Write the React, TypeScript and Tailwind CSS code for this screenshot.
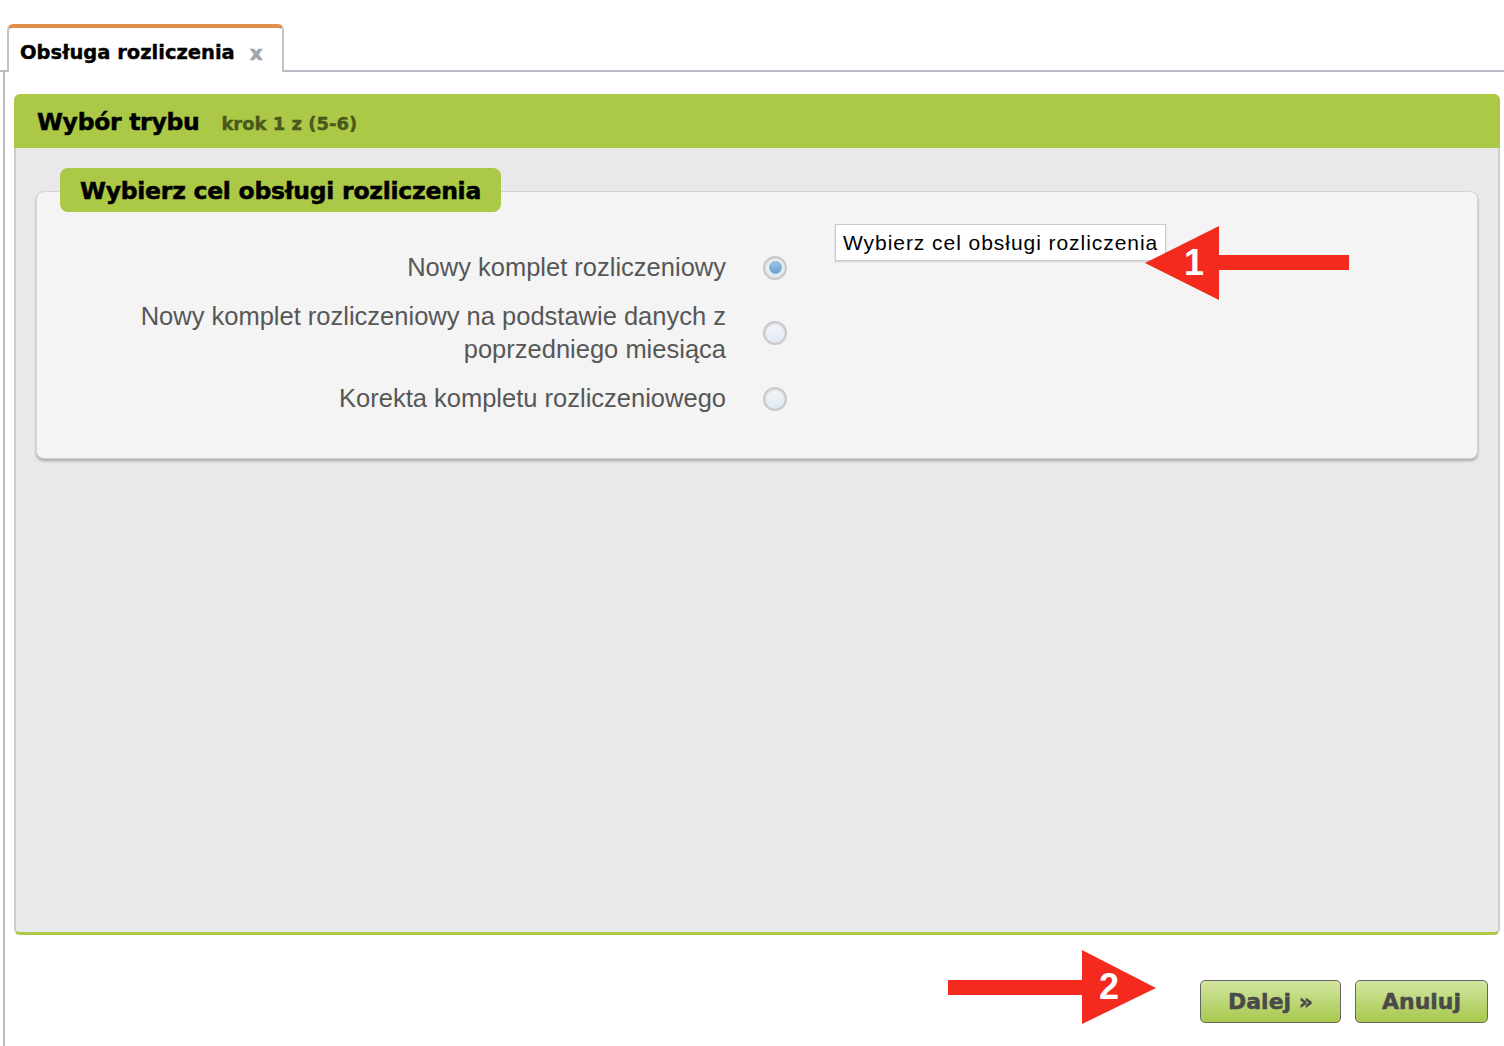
import React from 'react';

const Radio = ({ checked }: { checked?: boolean }) => (
  <div className="w-6 h-6 shrink-0 rounded-full border-2 border-[#c9c9c9] bg-gradient-to-b from-[#f4f7fa] to-[#dfe8f1] flex items-center justify-center shadow-[inset_0_1px_2px_rgba(0,0,0,0.15)]">
    {checked && <div className="w-[13px] h-[13px] rounded-full bg-gradient-to-b from-[#9cc4e6] to-[#6aa2d3] border border-[#7aa9d2]" />}
  </div>
);

const Arrow = ({ dir, label }: { dir: 'left' | 'right'; label: string }) => (
  <div className="relative w-[208px] h-[74px]">
    <svg width="208" height="74" viewBox="0 0 208 74" className="absolute inset-0">
      {dir === 'left' ? (
        <polygon points="0,37 74,0 74,29 204,29 204,44 74,44 74,74" fill="#f42a1f" />
      ) : (
        <polygon points="208,38 134,0 134,30 0,30 0,45 134,45 134,74" fill="#f42a1f" />
      )}
    </svg>
    <span
      className={`absolute top-[15px] font-['Liberation_Sans',Arial,sans-serif] font-bold text-[36px] leading-[44px] text-white ${
        dir === 'left' ? 'left-[39px]' : 'left-[151px]'
      }`}
    >
      {label}
    </span>
  </div>
);

export default function App() {
  return (
    <div className="relative w-[1504px] h-[1046px] bg-white overflow-hidden font-['DejaVu_Sans',Verdana,sans-serif]">
      {/* tab strip */}
      <div className="pt-6 flex">
        <div className="w-[7px] h-[48px] border-b-2 border-[#babbc4]" />
        <div className="w-[277px] h-[48px] bg-white border-t-4 border-t-[#e0904c] border-x-2 border-x-[#c2c3cb] rounded-t-md flex items-center pl-[11px] pt-[6px] gap-[15px]">
          <span className="text-[19.5px] font-bold text-black [-webkit-text-stroke:0.4px]">Obsługa rozliczenia</span>
          <span className="text-[20px] font-bold text-[#9ea5ad] leading-none [-webkit-text-stroke:0.6px]">x</span>
        </div>
        <div className="flex-1 h-[48px] border-b-2 border-[#babbc4]" />
      </div>

      {/* content */}
      <div className="ml-[3px] h-[974px] border-l-2 border-[#babbc4] pl-[9px] pr-[4px] pt-[22px]">
        <div className="h-[54px] bg-[#abc846] rounded-t-md flex items-center px-[23px] pt-[3px]">
          <div className="flex items-baseline gap-[22px]">
            <span className="text-[23.5px] font-bold text-black tracking-[-0.3px] [-webkit-text-stroke:0.5px]">Wybór trybu</span>
            <span className="text-[18px] font-bold text-[#4a581c] [-webkit-text-stroke:0.4px]">krok 1 z (5-6)</span>
          </div>
        </div>

        <div className="h-[787px] bg-[#e9e9e9] border-x-2 border-[#cdcdcd] border-b-[3px] border-b-[#abc846] rounded-b-md px-[20px] pt-[20px]">
          <div className="relative">
            <div className="relative z-10 ml-[24px] inline-flex h-[44px] items-center px-5 pt-[3px] bg-[#abc846] rounded-lg">
              <span className="text-[23.5px] font-bold text-black tracking-[-0.25px] [-webkit-text-stroke:0.5px]">Wybierz cel obsługi rozliczenia</span>
            </div>
            <div className="relative -mt-[21px] h-[268px] bg-[#f4f4f4] rounded-lg border border-[#d4d4d4] shadow-[0_2px_3px_rgba(0,0,0,0.28)] pt-[59px] font-['Liberation_Sans',Arial,sans-serif] text-[25.5px] text-[#575757] leading-[33px]">
              <div className="flex flex-col gap-4">
                <div className="flex items-center gap-[37px]">
                  <div className="w-[689px] text-right">Nowy komplet rozliczeniowy</div>
                  <Radio checked />
                </div>
                <div className="flex items-center gap-[37px]">
                  <div className="w-[689px] text-right">
                    Nowy komplet rozliczeniowy na podstawie danych z<br />poprzedniego miesiąca
                  </div>
                  <Radio />
                </div>
                <div className="flex items-center gap-[37px]">
                  <div className="w-[689px] text-right">Korekta kompletu rozliczeniowego</div>
                  <Radio />
                </div>
              </div>

              {/* tooltip */}
              <div className="absolute left-[798px] top-[32px] h-[37px] px-[7px] flex items-center bg-white border border-[#c9c9c9] shadow-[0_1px_2px_rgba(0,0,0,0.15)] text-[21px] text-black tracking-[0.95px] whitespace-nowrap">
                Wybierz cel obsługi rozliczenia
              </div>
            </div>
          </div>
        </div>

        {/* footer buttons */}
        <div className="flex justify-end gap-[14px] pr-[12px] pt-[45px]">
          <button className="w-[141px] h-[43px] rounded-[5px] border border-[#666] bg-gradient-to-b from-[#d4e6a0] to-[#a7c84a] text-[22px] font-bold text-[#4a4a4a] font-['DejaVu_Sans',Verdana,sans-serif] [-webkit-text-stroke:0.5px]">
            Dalej »
          </button>
          <button className="w-[133px] h-[43px] rounded-[5px] border border-[#666] bg-gradient-to-b from-[#d4e6a0] to-[#a7c84a] text-[22px] font-bold text-[#4a4a4a] font-['DejaVu_Sans',Verdana,sans-serif] [-webkit-text-stroke:0.5px]">
            Anuluj
          </button>
        </div>
      </div>

      {/* annotation arrows */}
      <div className="absolute left-[1145px] top-[226px]">
        <Arrow dir="left" label="1" />
      </div>
      <div className="absolute left-[948px] top-[950px]">
        <Arrow dir="right" label="2" />
      </div>
    </div>
  );
}
